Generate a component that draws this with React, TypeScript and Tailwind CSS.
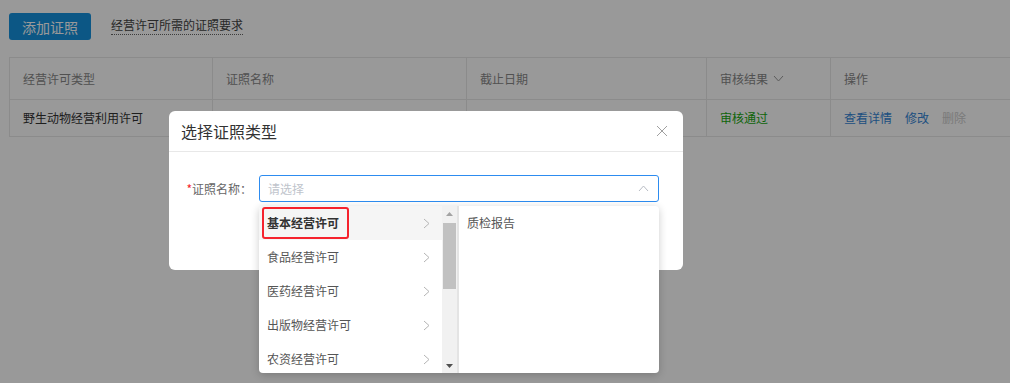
import React from "react";

const cols = ["w-[203px]", "w-[254px]", "w-[240px]", "w-[124px]", "flex-1"];

const ChevronRight = () => (
  <svg width="7" height="11" viewBox="0 0 7 11" fill="none">
    <polyline points="1,1 6,5.5 1,10" stroke="#b4b4b4" strokeWidth="1" />
  </svg>
);

const categorias = ["基本经营许可", "食品经营许可", "医药经营许可", "出版物经营许可", "农资经营许可"];

const ListaPermissoes = () => (
  <div className="absolute left-0 top-[31px] z-10 flex h-[167px] w-[400px] overflow-hidden rounded-[4px] bg-white shadow-[0_2px_8px_rgba(0,0,0,0.2)]">
    {/* coluna esquerda */}
    <div className="w-[183px]">
      {categorias.map((nome, i) => (
        <div
          key={nome}
          className={`flex h-[34px] items-center justify-between pl-[8px] pr-[12px] ${i === 0 ? "bg-[#f5f5f5] font-bold text-[#333]" : "text-[#555]"}`}
        >
          {i === 0 ? (
            <span className="-ml-[5px] inline-flex h-[32px] items-center rounded-[3px] border-2 border-[#f5222d] pl-[3px] pr-[8px]">
              {nome}
            </span>
          ) : (
            <span>{nome}</span>
          )}
          <ChevronRight />
        </div>
      ))}
    </div>

    {/* barra de rolagem */}
    <div className="flex w-[15px] flex-col items-center bg-[#f1f1f1]">
      <div className="flex h-[15px] w-full items-center justify-center">
        <svg width="7" height="4" viewBox="0 0 7 4">
          <polygon points="0,4 7,4 3.5,0" fill="#a3a3a3" />
        </svg>
      </div>
      <div className="mt-[2px] h-[66px] w-[13px] bg-[#c1c1c1]" />
      <div className="flex-1" />
      <div className="flex h-[15px] w-full items-center justify-center">
        <svg width="7" height="4" viewBox="0 0 7 4">
          <polygon points="0,0 7,0 3.5,4" fill="#505050" />
        </svg>
      </div>
    </div>

    {/* coluna direita */}
    <div className="flex-1 border-l-2 border-[#e4e4e4]">
      <div className="flex h-[34px] items-center pl-[8px] text-[#555]">质检报告</div>
    </div>
  </div>
);

export default function App() {
  return (
    <div
      className="relative h-[383px] w-[1010px] overflow-hidden bg-white text-[12px] leading-[14px] text-[#333]"
      style={{ fontFamily: '"Microsoft YaHei", "Noto Sans CJK SC", "Noto Sans", sans-serif' }}
    >
      {/* Página de fundo */}
      <div className="pl-[9px] pt-[13px]">
        <div className="flex items-center gap-[20px]">
          <button className="flex h-[27px] w-[82px] items-center justify-center rounded-[3px] bg-[#1592de] text-[14px] text-white">
            添加证照
          </button>
          <span className="border-b border-dotted border-[#666] pb-[2px] text-[#444]">经营许可所需的证照要求</span>
        </div>

        <div className="mt-[17px] w-[1020px] border-l border-t border-[#e8e8e8]">
          <div className="flex h-[42px] text-[#888]">
            {["经营许可类型", "证照名称", "截止日期", "审核结果", "操作"].map((t, i) => (
              <div key={t} className={`${cols[i]} flex items-center gap-[5px] border-b border-r border-[#e8e8e8] pl-[13px]`}>
                {t}
                {i === 3 && (
                  <svg width="11" height="7" viewBox="0 0 11 7" fill="none">
                    <polyline points="1,1 5.5,6 10,1" stroke="#999" strokeWidth="1" />
                  </svg>
                )}
              </div>
            ))}
          </div>
          <div className="flex h-[37px]">
            <div className={`${cols[0]} flex items-center border-b border-r border-[#e8e8e8] pl-[13px] text-[#333]`}>野生动物经营利用许可</div>
            <div className={`${cols[1]} border-b border-r border-[#e8e8e8]`} />
            <div className={`${cols[2]} border-b border-r border-[#e8e8e8]`} />
            <div className={`${cols[3]} flex items-center border-b border-r border-[#e8e8e8] pl-[13px] text-[#16a80f]`}>审核通过</div>
            <div className={`${cols[4]} flex items-center gap-[13px] border-b border-r border-[#e8e8e8] pl-[13px]`}>
              <span className="text-[#3385d6]">查看详情</span>
              <span className="text-[#3385d6]">修改</span>
              <span className="text-[#ccc]">删除</span>
            </div>
          </div>
        </div>
      </div>

      {/* Máscara */}
      <div className="absolute inset-0 bg-black/40" />

      {/* Diálogo */}
      <div className="absolute left-[169px] top-[111px] w-[514px] rounded-[6px] bg-white">
        <div className="flex h-[41px] items-center justify-between border-b border-[#e8e8e8] pl-[12px] pr-[15px]">
          <span className="text-[16px] text-[#333]">选择证照类型</span>
          <svg width="12" height="12" viewBox="0 0 12 12" fill="none">
            <path d="M1 1L11 11M11 1L1 11" stroke="#a0a0a0" strokeWidth="1" />
          </svg>
        </div>
        <div className="flex items-start pb-[68px] pt-[23px]">
          <label className="flex h-[27px] w-[90px] items-center justify-end pr-[7px] text-[#666]">
            <span className="text-[#f5222d]">*</span>证照名称：
          </label>
          <div className="relative w-[400px]">
            <div className="flex h-[27px] items-center justify-between rounded-[3px] border border-[#2d8cf0] pl-[8px] pr-[9px]">
              <span className="text-[#c0c4cc]">请选择</span>
              <svg width="11" height="7" viewBox="0 0 11 7" fill="none">
                <polyline points="1,6 5.5,1 10,6" stroke="#b8bcc4" strokeWidth="1" />
              </svg>
            </div>
            <ListaPermissoes />
          </div>
        </div>
      </div>
    </div>
  );
}
